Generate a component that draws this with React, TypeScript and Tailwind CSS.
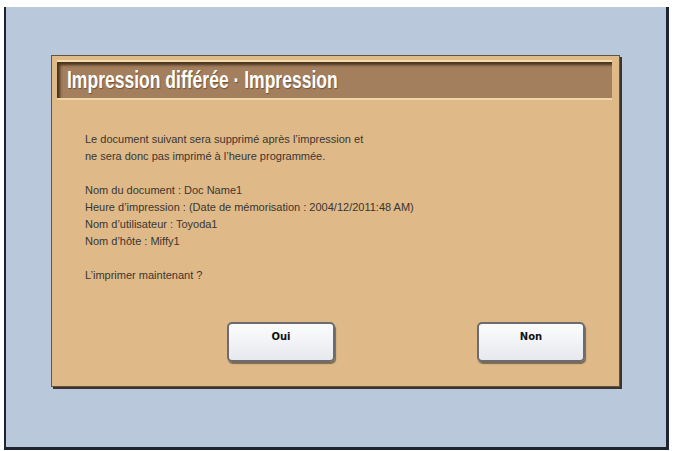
import React from 'react'

const lines = [
  'Le document suivant sera supprimé après l\u2019impression et',
  'ne sera donc pas imprimé à l\u2019heure programmée.',
  '',
  'Nom du document : Doc Name1',
  'Heure d\u2019impression : (Date de mémorisation : 2004/12/2011:48 AM)',
  'Nom d\u2019utilisateur : Toyoda1',
  'Nom d\u2019hôte : Miffy1',
  '',
  'L\u2019imprimer maintenant ?',
]

function DialogButton({ label }: { label: string }) {
  return (
    <button className="w-[108px] h-[40px] rounded-[5px] border-2 border-[#6a6c70] bg-gradient-to-b from-[#fbfcfd] to-[#e7e9ee] shadow-[1px_2px_1px_rgba(40,40,40,0.55)] flex justify-center pt-[5px]">
      <span className="font-['DejaVu_Sans',sans-serif] font-bold text-[10px] text-[#111]">{label}</span>
    </button>
  )
}

export default function App() {
  return (
    <div className="w-[673px] h-[451px] bg-white overflow-hidden">
      <div className="ml-[4px] mt-[7px] w-[665px] h-[443px] bg-[#b9c9db] border-l-2 border-r-[3px] border-b-[3px] border-[#1f2530] pl-[45px] pt-[48px]">
        {/* dialog */}
        <div className="w-[569px] h-[332px] bg-[#dfb987] border border-[#5f5444] shadow-[2px_2px_0_#3b342c] flex flex-col">
          {/* title bar */}
          <div className="ml-[5px] mt-[4px] w-[555px] h-[40px] bg-[#a37f5e] border-t-2 border-t-[#f3dcae] border-b-2 border-b-[#efd6a6] shadow-[inset_3px_3px_3px_rgba(40,25,10,0.75)] flex items-center pl-[10px] overflow-hidden">
            <span className="inline-block origin-left scale-x-[0.73] whitespace-nowrap font-['Liberation_Sans',sans-serif] font-bold text-[24px] leading-none text-white [text-shadow:1px_1px_1px_rgba(60,40,20,0.5)]">
              Impression différée · Impression
            </span>
          </div>

          {/* message */}
          <div className="ml-[33px] mt-[31px] font-['Liberation_Sans',sans-serif] text-[11px] leading-[17px] text-[#3a3632]">
            {lines.map((l, i) => (
              <div key={i} className="h-[17px] whitespace-nowrap">{l}</div>
            ))}
          </div>

          {/* buttons */}
          <div className="mt-[38px] pl-[175px] flex gap-[142px]">
            <DialogButton label="Oui" />
            <DialogButton label="Non" />
          </div>
        </div>
      </div>
    </div>
  )
}
